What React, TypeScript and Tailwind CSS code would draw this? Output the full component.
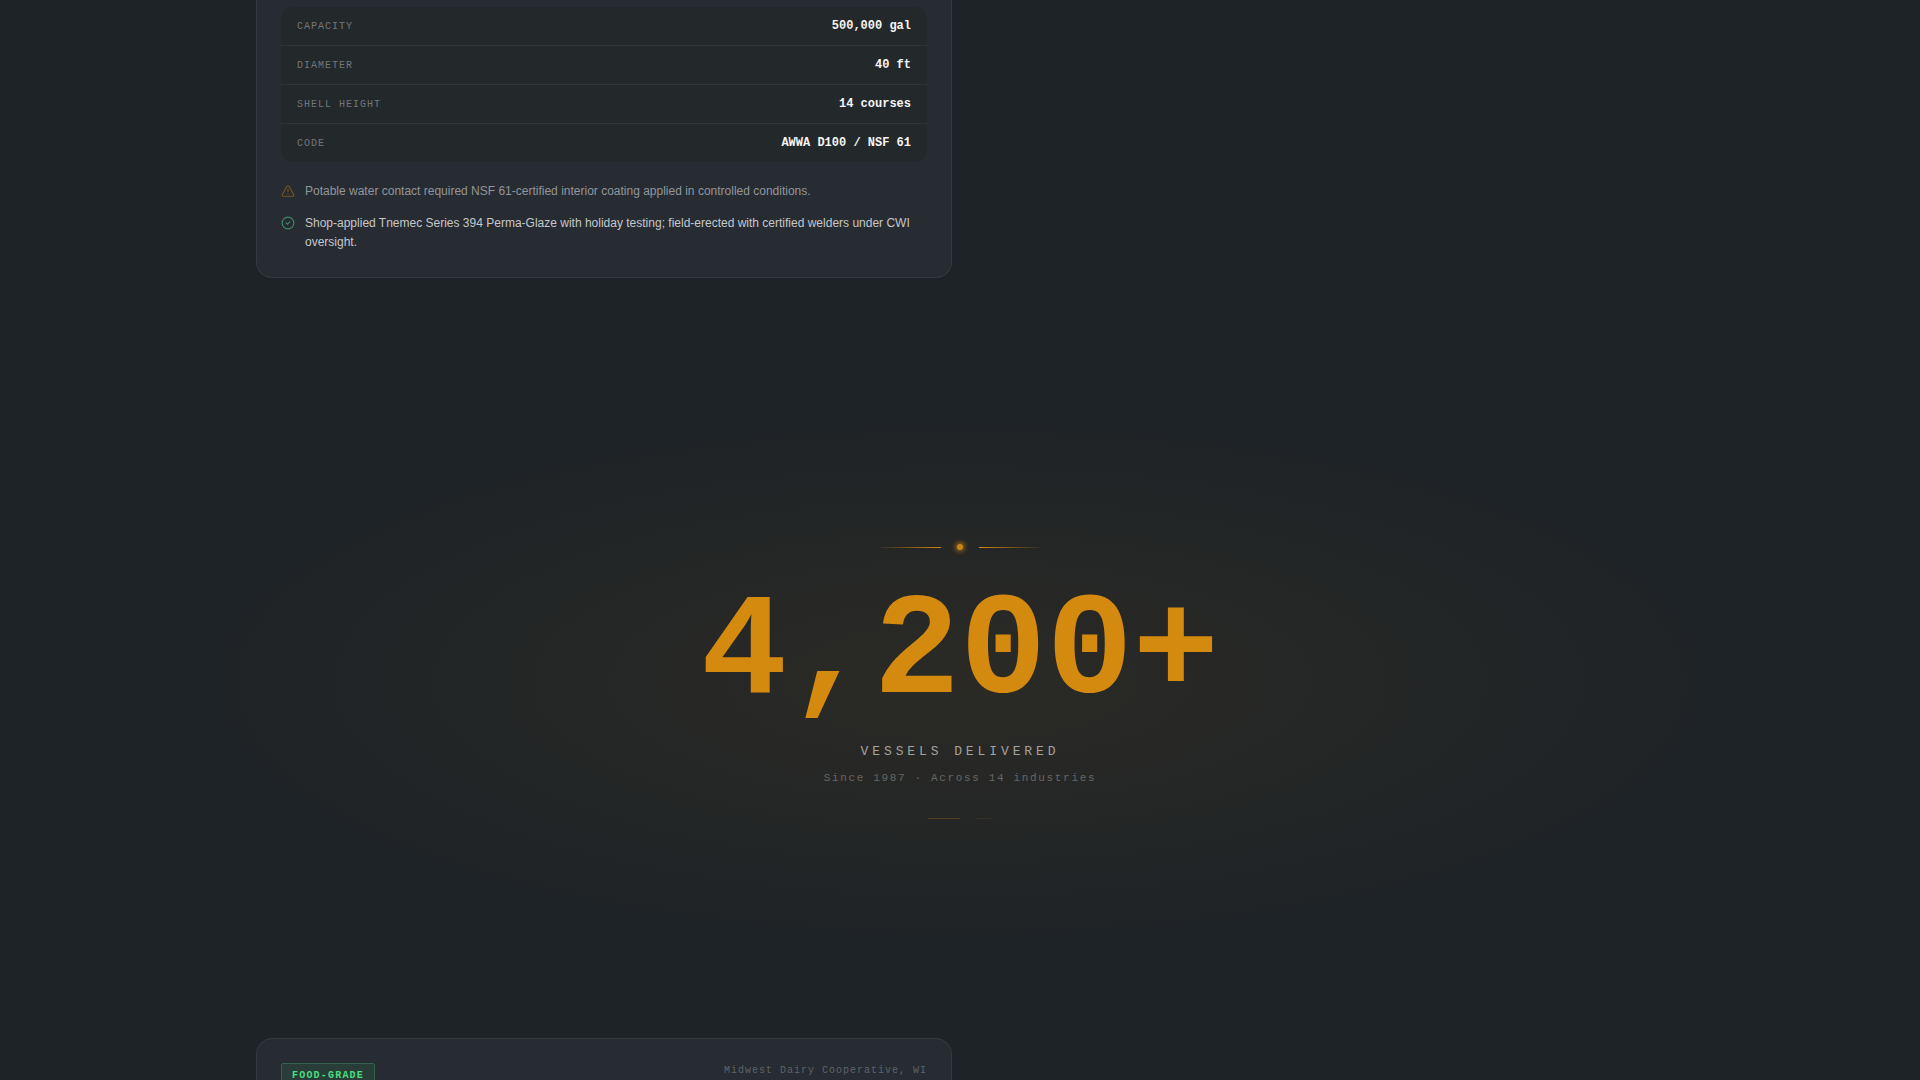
import { CircleCheck, TriangleAlert } from 'lucide-react'
import type { ReactNode } from 'react'

const specs = [
    { label: 'Capacity', value: '500,000 gal' },
    { label: 'Diameter', value: '40 ft' },
    { label: 'Shell Height', value: '14 courses' },
    { label: 'Code', value: 'AWWA D100 / NSF 61' },
]

const mono = "font-['Liberation_Mono',monospace]"

function Card({ children, className }: { children: ReactNode; className: string }) {
    return (
        <article className={`w-full border border-[#343a3e] bg-[#272b32] px-6 lg:w-[calc(50%-8px)] ${className}`}>
            {children}
        </article>
    )
}

function SpecTable() {
    return (
        <div className="overflow-hidden rounded-xl bg-[#23282b]">
            <table className={`w-full border-collapse ${mono}`}>
                <tbody>
                    {specs.map((spec) => (
                        <tr key={spec.label} className="border-b border-[#2f3438] last:border-b-0">
                            <th scope="row" className="px-4 py-[10px] text-left align-baseline text-[10px] leading-4 font-normal tracking-[1px] text-[#737678] uppercase">
                                {spec.label}
                            </th>
                            <td className="px-4 py-[10px] text-right align-baseline text-xs leading-[18px] font-bold text-[#f5f5f5]">
                                {spec.value}
                            </td>
                        </tr>
                    ))}
                </tbody>
            </table>
        </div>
    )
}

function Milestone() {
    return (
        <section className="mt-[74px] mb-[27px] flex flex-col items-center bg-[radial-gradient(ellipse_at_center,rgba(212,137,15,0.07)_0%,transparent_60%)] px-6 py-48 text-center">
            <div className="flex items-center gap-4" aria-hidden="true">
                <span className="h-px w-16 bg-linear-to-r from-transparent to-[#d4890f]" />
                <span className="size-[6px] rounded-full bg-[#c9851a] shadow-[0_0_4px_2px_#8a5f18]" />
                <span className="h-px w-16 bg-linear-to-l from-transparent to-[#d4890f]" />
            </div>
            <p className={`mt-8 text-7xl leading-none font-bold text-[#d4890f] md:text-[144px] ${mono}`}>4,200+</p>
            <h2 className={`mt-4 text-[13px] leading-5 tracking-[0.3em] text-[#a3a29f] uppercase ${mono}`}>Vessels Delivered</h2>
            <p className={`mt-2 text-[11px] leading-4 tracking-[0.15em] text-[#666664] ${mono}`}>
                Since 1987 · Across 14 industries
            </p>
            <div className="mt-8 flex items-center gap-4" aria-hidden="true">
                <span className="h-px w-8 bg-[#d4890f]/25" />
                <span className="h-px w-4 bg-[#d4890f]/10" />
            </div>
        </section>
    )
}

export default function App() {
    return (
        <main className="h-screen overflow-hidden bg-[#1e2327] font-['Liberation_Sans',sans-serif]">
            <div className="mx-auto max-w-[1408px]">
                <Card className="rounded-b-2xl border-t-0 pt-[7px] pb-[25px]">
                    <SpecTable />
                    <ul className="mt-5 space-y-[13px] text-xs leading-[19px]">
                        <li className="flex gap-[10px] text-[#93969a]">
                            <TriangleAlert className="mt-[2px] size-[14px] shrink-0 text-[#75541f]" strokeWidth={2} />
                            Potable water contact required NSF 61-certified interior coating applied in controlled conditions.
                        </li>
                        <li className="flex gap-[10px] text-[#c6c8ca]">
                            <CircleCheck className="mt-[2px] size-[14px] shrink-0 text-[#3a8a60]" strokeWidth={2} />
                            Shop-applied Tnemec Series 394 Perma-Glaze with holiday testing; field-erected with certified welders under CWI oversight.
                        </li>
                    </ul>
                </Card>
            </div>
            <Milestone />
            <div className="mx-auto max-w-[1408px]">
                <Card className="rounded-t-2xl py-6">
                    <header className={`flex items-start justify-between ${mono}`}>
                        <span className="rounded-xs border border-[#31624a] bg-[#293d38] px-[10px] py-1 text-[10px] leading-4 font-bold tracking-[0.12em] text-[#4ade80] uppercase">
                            Food-Grade
                        </span>
                        <span className="text-[10px] leading-[15px] tracking-[1px] text-[#5f6369]">Midwest Dairy Cooperative, WI</span>
                    </header>
                </Card>
            </div>
        </main>
    )
}
